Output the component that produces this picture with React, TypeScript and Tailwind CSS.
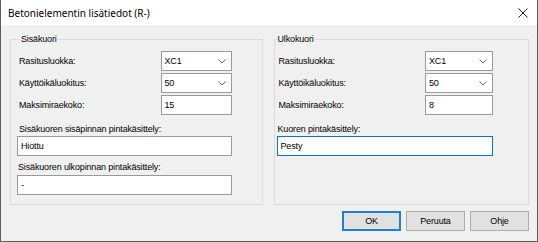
import React from 'react';

const font = "font-['Liberation_Sans','Arial',sans-serif]";

function Chevron() {
  return (
    <svg width="8" height="5" viewBox="0 0 8 5" className="shrink-0">
      <path d="M0.5 0.5 L4 4 L7.5 0.5" fill="none" stroke="#6d6d6d" strokeWidth="1" />
    </svg>
  );
}

function Select({ value, width }: { value: string; width: string }) {
  return (
    <div className={`${width} h-[20px] bg-white border border-[#9a9a9a] flex items-center justify-between pl-[3px] pr-[5px]`}>
      <span className="leading-none">{value}</span>
      <Chevron />
    </div>
  );
}

function TextBox({ value, width = 'w-full', focused = false }: { value: string; width?: string; focused?: boolean }) {
  return (
    <div
      className={`${width} h-[20px] bg-white border flex items-center pl-[3px] ${
        focused ? 'border-[#0078d7]' : 'border-[#9a9a9a]'
      }`}
    >
      <span className="leading-none">{value}</span>
    </div>
  );
}

function Row({ label, children }: { label: string; children: React.ReactNode }) {
  return (
    <div className="flex items-center justify-between">
      <span className="pl-[2px] leading-[13px]">{label}</span>
      {children}
    </div>
  );
}

export default function App() {
  return (
    <div
      className={`w-[538px] h-[242px] flex flex-col bg-[#f0f0f0] border-x border-b border-[#5c5c5c] text-[9px] tracking-[-0.15px] text-black ${font}`}
    >
      <div className="h-[25px] bg-white flex items-center justify-between pl-[7px] pr-[9px] shrink-0">
        <span className="font-['Noto_Sans',sans-serif] text-[10px] tracking-normal leading-none">Betonielementin lisätiedot (R-)</span>
        <svg width="10" height="10" viewBox="0 0 10 10">
          <path d="M0.5 0.5 L9.5 9.5 M9.5 0.5 L0.5 9.5" stroke="#222" strokeWidth="1" />
        </svg>
      </div>

      <div className="flex flex-col pl-[9px] pr-[8px]">
        <div className="flex gap-[11px] mt-[8px]">
          <fieldset className="w-[253px] h-[172px] border border-[#dcdcdc] pl-[6px] pr-[30px] pt-[5px] m-0 min-w-0">
            <legend className="ml-[3px] px-[1px] leading-[13px]">Sisäkuori</legend>
            <div className="flex flex-col gap-[2px]">
              <Row label="Rasitusluokka:">
                <Select value="XC1" width="w-[71px]" />
              </Row>
              <Row label="Käyttöikäluokitus:">
                <Select value="50" width="w-[71px]" />
              </Row>
              <Row label="Maksimiraekoko:">
                <TextBox value="15" width="w-[71px]" />
              </Row>
            </div>
            <div className="mt-[8px] pl-[2px] leading-[13px]">Sisäkuoren sisäpinnan pintakäsittely:</div>
            <TextBox value="Hiottu" />
            <div className="mt-[5px] pl-[1px] leading-[13px]">Sisäkuoren ulkopinnan pintakäsittely:</div>
            <div className="mt-[1px]">
              <TextBox value="-" />
            </div>
          </fieldset>

          <fieldset className="w-[256px] h-[172px] border border-[#dcdcdc] pl-[2px] pr-[35px] pt-[5px] m-0 min-w-0">
            <legend className="ml-[0px] px-[1px] leading-[13px]">Ulkokuori</legend>
            <div className="flex flex-col gap-[2px]">
              <Row label="Rasitusluokka:">
                <Select value="XC1" width="w-[68px]" />
              </Row>
              <Row label="Käyttöikäluokitus:">
                <Select value="50" width="w-[68px]" />
              </Row>
              <Row label="Maksimiraekoko:">
                <TextBox value="8" width="w-[68px]" />
              </Row>
            </div>
            <div className="mt-[8px] pl-[1px] leading-[13px]">Kuoren pintakäsittely:</div>
            <TextBox value="Pesty" focused />
          </fieldset>
        </div>

        <div className="flex justify-end gap-[5px] mt-[6px]">
          <button className="w-[59px] h-[20px] bg-[#e1e1e1] border-2 border-[#1f7fd6] leading-none">OK</button>
          <button className="w-[59px] h-[20px] bg-[#e1e1e1] border border-[#adadad] leading-none">Peruuta</button>
          <button className="w-[59px] h-[20px] bg-[#e1e1e1] border border-[#adadad] leading-none">Ohje</button>
        </div>
      </div>
    </div>
  );
}
